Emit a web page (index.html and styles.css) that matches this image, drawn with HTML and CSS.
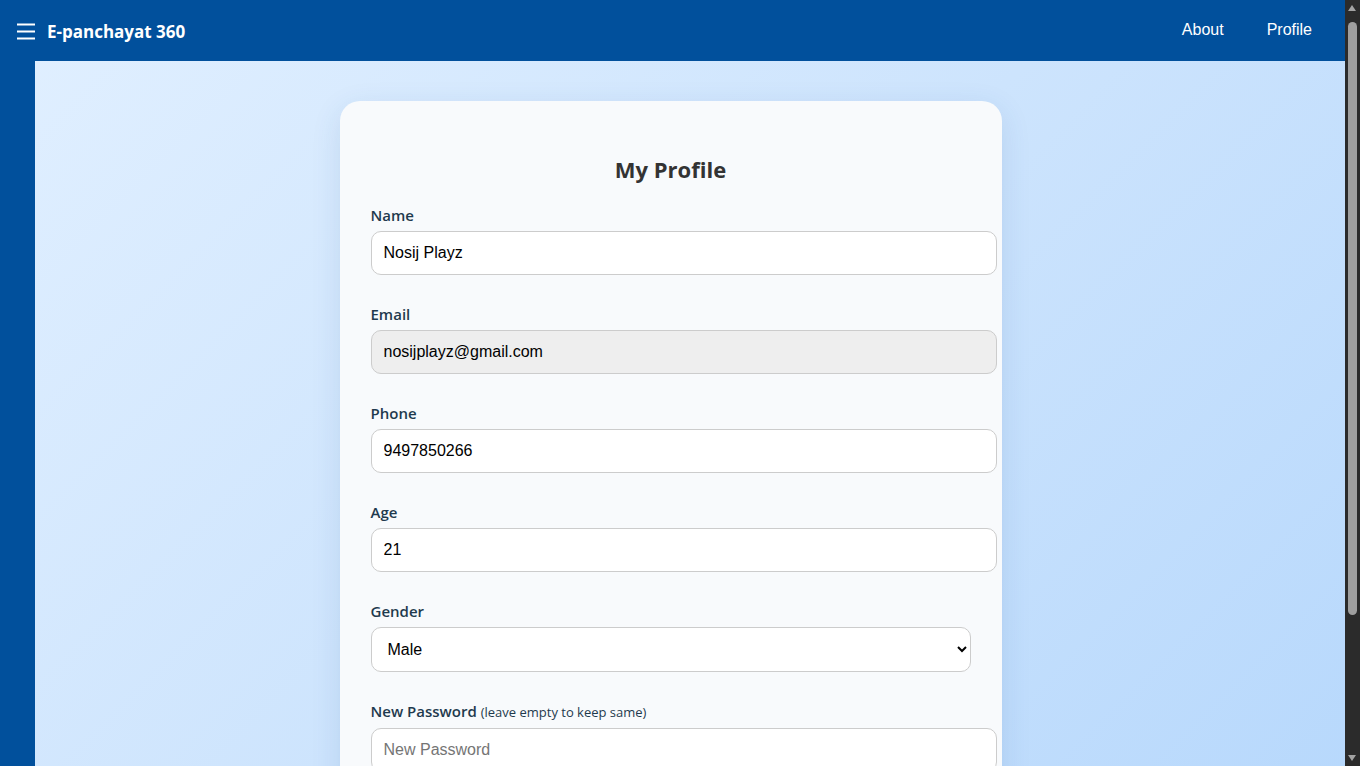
FILE: index.html
```html
<!DOCTYPE html>
<html lang="en">
<head>
<meta charset="utf-8">
<title>E-panchayat 360 - My Profile</title>
<link rel="stylesheet" href="styles.css">
</head>
<body>
<header class="topbar">
  <div class="brand">
    <svg class="burger" width="18" height="17" viewBox="0 0 18 17" aria-hidden="true">
      <rect x="0" y="0.5" width="18" height="2" fill="#fff"/>
      <rect x="0" y="7.5" width="18" height="2" fill="#fff"/>
      <rect x="0" y="14.5" width="18" height="2" fill="#fff"/>
    </svg>
    <span class="logo">E-panchayat 360</span>
  </div>
  <nav class="nav">
    <a href="#" class="nav-link">About</a>
    <a href="#" class="nav-link">Profile</a>
  </nav>
</header>
<aside class="sidebar"></aside>
<main class="main">
  <section class="card">
    <h2 class="title">My Profile</h2>
    <form class="form">
      <div class="group">
        <label class="label">Name</label>
        <input class="field" type="text" value="Nosij Playz">
      </div>
      <div class="group">
        <label class="label">Email</label>
        <input class="field field-disabled" type="email" value="nosijplayz@gmail.com" readonly>
      </div>
      <div class="group">
        <label class="label">Phone</label>
        <input class="field" type="text" value="9497850266">
      </div>
      <div class="group">
        <label class="label">Age</label>
        <input class="field" type="text" value="21">
      </div>
      <div class="group">
        <label class="label">Gender</label>
        <select class="select">
          <option selected>Male</option>
          <option>Female</option>
          <option>Other</option>
        </select>
      </div>
      <div class="group">
        <label class="label">New Password <span class="hint">(leave empty to keep same)</span></label>
        <input class="field" type="password" placeholder="New Password">
      </div>
      <button type="button" class="btn">Update Profile</button>
    </form>
  </section>
</main>
<div class="scrollbar" aria-hidden="true">
  <span class="sb-arrow sb-up"></span>
  <span class="sb-thumb"></span>
  <span class="sb-arrow sb-down"></span>
</div>
</body>
</html>
```

FILE: styles.css
```css
body {
  margin: 0;
  padding-right: 15px;
  font-family: "Open Sans", "Liberation Sans", sans-serif;
  background: #b8d9fc;
  color: #333;
}
.topbar {
  height: 61px;
  background: #01509c;
  display: flex;
  align-items: center;
  justify-content: space-between;
  padding: 0 33px 0 17px;
  box-sizing: border-box;
}
.brand {
  display: flex;
  align-items: center;
  gap: 12px;
  margin-top: 1px;
}
.burger {
  display: block;
}
.logo {
  color: #fff;
  font-weight: 700;
  font-size: 17px;
}
.nav {
  display: flex;
  gap: 43px;
  margin-top: -2px;
}
.nav-link {
  color: #fff;
  text-decoration: none;
  font-family: "Liberation Sans", Arial, sans-serif;
  font-size: 16px;
}
.sidebar {
  position: fixed;
  left: 0;
  top: 61px;
  bottom: 0;
  width: 35px;
  background: #01509c;
}
.main {
  background: linear-gradient(135deg, #e0efff 0%, #cde4fd 45%, #b3d6fc 100%);
  padding: 40px 0 40px;
  min-height: 860px;
}
.card {
  width: 600px;
  margin: 0 auto;
  position: relative;
  left: -2px;
  padding: 30px 31px 34px;
  background: #f8fafc;
  border-radius: 20px;
  box-shadow: 0 8px 30px rgba(30, 80, 140, 0.12);
}
.title {
  margin: 24px 0 21px;
  text-align: center;
  font-size: 22px;
  line-height: 28px;
  font-weight: 700;
  color: #333;
}
.form {
  display: flex;
  flex-direction: column;
}
.group {
  display: flex;
  flex-direction: column;
  margin-bottom: 28px;
}
.label {
  font-size: 15px;
  font-weight: 600;
  line-height: 20px;
  color: #1f3a4e;
  margin-top: 1px;
  margin-bottom: 6px;
}
.hint {
  font-size: 13px;
  font-weight: 400;
}
.field {
  width: 100%;
  box-sizing: content-box;
  height: 20px;
  padding: 11px 12px;
  border: 1px solid #ccc;
  border-radius: 10px;
  background: #fff;
  font-family: "Liberation Sans", Arial, sans-serif;
  font-size: 16px;
  color: #000;
  outline: none;
}
.field-disabled {
  background: #eeeeee;
}
.field::placeholder {
  color: #757575;
}
.select {
  width: 100%;
  height: 45px;
  padding: 0 12px;
  border: 1px solid #ccc;
  border-radius: 10px;
  background: #fff;
  font-family: "Liberation Sans", Arial, sans-serif;
  font-size: 16px;
  color: #000;
}
.btn {
  margin-top: 10px;
  height: 48px;
  border: none;
  border-radius: 10px;
  background: #01509c;
  color: #fff;
  font-family: "Open Sans", "Liberation Sans", sans-serif;
  font-weight: 600;
  font-size: 16px;
}
.scrollbar {
  position: fixed;
  top: 0;
  right: 0;
  bottom: 0;
  width: 15px;
  background: #2b2b2b;
}
.sb-arrow {
  position: absolute;
  left: 3px;
  width: 0;
  height: 0;
  border-left: 4.5px solid transparent;
  border-right: 4.5px solid transparent;
}
.sb-up {
  top: 5px;
  border-bottom: 6px solid #a3a3a3;
}
.sb-down {
  bottom: 5px;
  border-top: 6px solid #a3a3a3;
}
.sb-thumb {
  position: absolute;
  top: 22px;
  left: 3px;
  width: 9px;
  height: 593px;
  border-radius: 5px;
  background: #9f9f9f;
}
```
